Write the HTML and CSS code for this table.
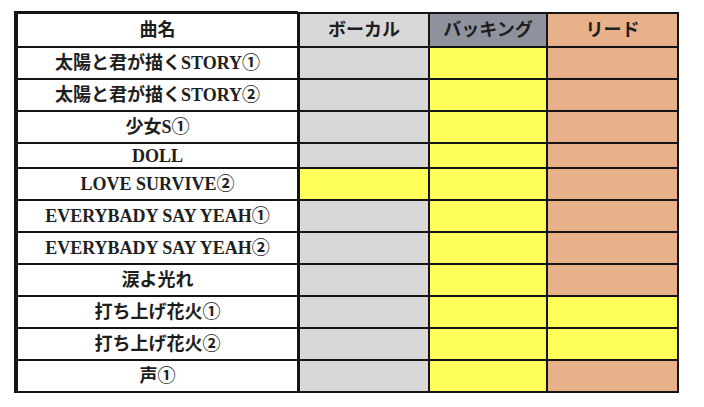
FILE: index.html
```html
<!DOCTYPE html>
<html lang="ja">
<head>
<meta charset="utf-8">
<title>曲名</title>
<link rel="stylesheet" href="styles.css">
</head>
<body>
<div class="sheet">
  <div class="cell name hd first">曲名</div>
  <div class="cell voc">ボーカル</div>
  <div class="cell backhd">バッキング</div>
  <div class="cell lead">リード</div>

  <div class="cell name">太陽と君が描くSTORY①</div>
  <div class="cell voc"></div><div class="cell yel"></div><div class="cell lead"></div>

  <div class="cell name">太陽と君が描くSTORY②</div>
  <div class="cell voc"></div><div class="cell yel"></div><div class="cell lead"></div>

  <div class="cell name">少女S①</div>
  <div class="cell voc"></div><div class="cell yel"></div><div class="cell lead"></div>

  <div class="cell name">DOLL</div>
  <div class="cell voc"></div><div class="cell yel"></div><div class="cell lead"></div>

  <div class="cell name">LOVE SURVIVE②</div>
  <div class="cell yel"></div><div class="cell yel"></div><div class="cell lead"></div>

  <div class="cell name">EVERYBADY SAY YEAH①</div>
  <div class="cell voc"></div><div class="cell yel"></div><div class="cell lead"></div>

  <div class="cell name">EVERYBADY SAY YEAH②</div>
  <div class="cell voc"></div><div class="cell yel"></div><div class="cell lead"></div>

  <div class="cell name">涙よ光れ</div>
  <div class="cell voc"></div><div class="cell yel"></div><div class="cell lead"></div>

  <div class="cell name">打ち上げ花火①</div>
  <div class="cell voc"></div><div class="cell yel"></div><div class="cell yel"></div>

  <div class="cell name">打ち上げ花火②</div>
  <div class="cell voc"></div><div class="cell yel"></div><div class="cell yel"></div>

  <div class="cell name last">声①</div>
  <div class="cell voc"></div><div class="cell yel"></div><div class="cell lead"></div>
</div>
</body>
</html>
```
FILE: styles.css
```css
html, body {
  margin: 0;
  padding: 0;
  background: #ffffff;
}
body {
  padding: 12px 0 0 14px;
  font-family: "Liberation Serif", "Noto Sans CJK JP", serif;
}
.sheet {
  display: inline-grid;
  grid-template-columns: 280px 128px 116px 129px;
  grid-template-rows: 32px 30px 30px 30px 23px repeat(7, 30px);
  gap: 2px;
  padding: 2px 2px 2px 4px;
  background: #141414;
}
.cell {
  display: flex;
  align-items: center;
  justify-content: center;
  font-size: 18px;
  font-weight: 700;
  color: #1e1e1e;
  white-space: nowrap;
  line-height: 1;
}
.name {
  background: #ffffff;
  border-right: 1px solid #141414;
}
.first {
  box-shadow: 0 -3px 0 #141414, -4px -3px 0 #141414;
}
.last {
  box-shadow: 0 3px 0 #141414, -4px 3px 0 #141414;
}
.voc {
  background: #d8d8d8;
}
.backhd {
  background: #8d929d;
}
.yel {
  background: #fefe58;
}
.lead {
  background: #e8b18a;
}
```
